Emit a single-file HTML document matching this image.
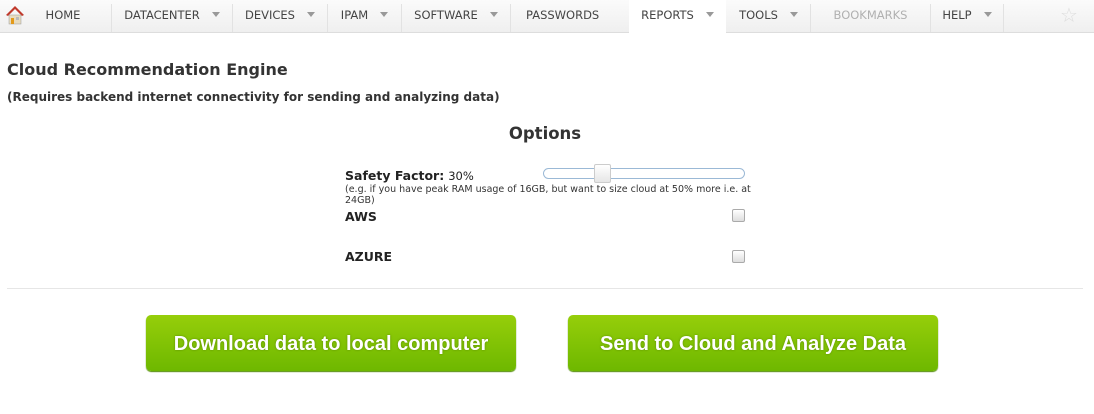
<!DOCTYPE html>
<html><head><meta charset="utf-8"><style>
body{margin:0;width:1094px;height:414px;background:#fff;font-family:Tahoma,"DejaVu Sans","Liberation Sans",sans-serif;position:relative;overflow:hidden;color:#222}
.nav{position:absolute;left:0;top:0;width:1094px;height:32px;background:linear-gradient(#fbfbfb,#efefef);border-bottom:1px solid #ddd}
.it{position:absolute;top:0;height:32px;line-height:31px;font-size:11.5px;color:#444;text-align:center}
.sep{position:absolute;top:4px;width:1px;height:28px;background:#e2e2e2}
.ar{display:inline-block;width:0;height:0;border-left:4px solid transparent;border-right:4px solid transparent;border-top:5px solid #999;margin-left:12px;vertical-align:2px}
.abs{position:absolute}
.btn{position:absolute;top:315px;height:56px;width:370px;border-radius:5px;background:linear-gradient(#96ce0a,#6eb800);box-shadow:0 1px 1px #4f8a00;color:#fff;font:bold 20px "Liberation Sans",Arial,sans-serif;text-align:center;line-height:58px;text-shadow:0 0 2px #5a8a00}
.cb{position:absolute;width:11px;height:11px;border:1px solid #aaa;border-radius:2px;background:linear-gradient(#fff,#ddd)}
</style></head><body>
<div class="nav">
<svg class="abs" style="left:5px;top:5px" width="20" height="20" viewBox="0 0 20 20"><path d="M10 1 L1 10 L3 11 L10 4 L17 11 L19 10Z" fill="#c0392b"/><rect x="4" y="10" width="12" height="9" fill="#e8dcc0" stroke="#999" stroke-width=".5"/><rect x="6" y="13" width="3" height="6" fill="#e39a1a"/><rect x="11" y="12" width="3" height="3" fill="#bbb"/></svg>
<div class="it" style="left:30px;width:66px">HOME</div>
<div class="sep" style="left:111px"></div>
<div class="it" style="left:112px;width:120px">DATACENTER<span class="ar"></span></div>
<div class="sep" style="left:232px"></div>
<div class="it" style="left:233px;width:94px">DEVICES<span class="ar"></span></div>
<div class="sep" style="left:327px"></div>
<div class="it" style="left:328px;width:73px">IPAM<span class="ar"></span></div>
<div class="sep" style="left:401px"></div>
<div class="it" style="left:402px;width:108px">SOFTWARE<span class="ar"></span></div>
<div class="sep" style="left:510px"></div>
<div class="it" style="left:511px;width:118px;text-align:left;padding-left:15px;box-sizing:border-box">PASSWORDS</div>
<div class="it" style="left:629px;width:97px;background:#fff;height:33px">REPORTS<span class="ar"></span></div>
<div class="it" style="left:727px;width:83px">TOOLS<span class="ar"></span></div>
<div class="sep" style="left:810px"></div>
<div class="it" style="left:811px;width:119px;color:#b0b0b0">BOOKMARKS</div>
<div class="sep" style="left:930px"></div>
<div class="it" style="left:931px;width:72px">HELP<span class="ar"></span></div>
<div class="sep" style="left:1003px"></div>
<div class="abs" style="left:1060px;top:3px;font-size:20px;color:#ddd">☆</div>
</div>
<div class="abs" style="left:7px;top:60px;font-size:16px;font-weight:bold;color:#333">Cloud Recommendation Engine</div>
<div class="abs" style="left:7px;top:90px;font-size:12px;font-weight:bold;color:#333">(Requires backend internet connectivity for sending and analyzing data)</div>
<div class="abs" style="left:0;width:1090px;top:124px;text-align:center;font-size:16.5px;font-weight:bold;color:#333">Options</div>
<div class="abs" style="left:345px;top:168px;font-size:12.5px;color:#222"><b>Safety Factor:</b> <span style="font-size:11.5px">30%</span></div>
<div class="abs" style="left:345px;top:184px;width:410px;font-size:9.5px;color:#333;line-height:11px">(e.g. if you have peak RAM usage of 16GB, but want to size cloud at 50% more i.e. at 24GB)</div>
<div class="abs" style="left:543px;top:168px;width:200px;height:9px;border:1px solid #9bb9d6;border-radius:6px;background:#fff"></div>
<div class="abs" style="left:594px;top:164px;width:15px;height:17px;border:1px solid #ccc;border-radius:2px;background:linear-gradient(#fff,#e6e6e6)"></div>
<div class="abs" style="left:345px;top:209px;font-size:12.5px;font-weight:bold">AWS</div>
<div class="cb" style="left:732px;top:209px"></div>
<div class="abs" style="left:345px;top:249px;font-size:12.5px;font-weight:bold">AZURE</div>
<div class="cb" style="left:732px;top:250px"></div>
<div class="abs" style="left:7px;top:288px;width:1076px;height:1px;background:#e6e6e6"></div>
<div class="btn" style="left:146px">Download data to local computer</div>
<div class="btn" style="left:568px">Send to Cloud and Analyze Data</div>
</body></html>
